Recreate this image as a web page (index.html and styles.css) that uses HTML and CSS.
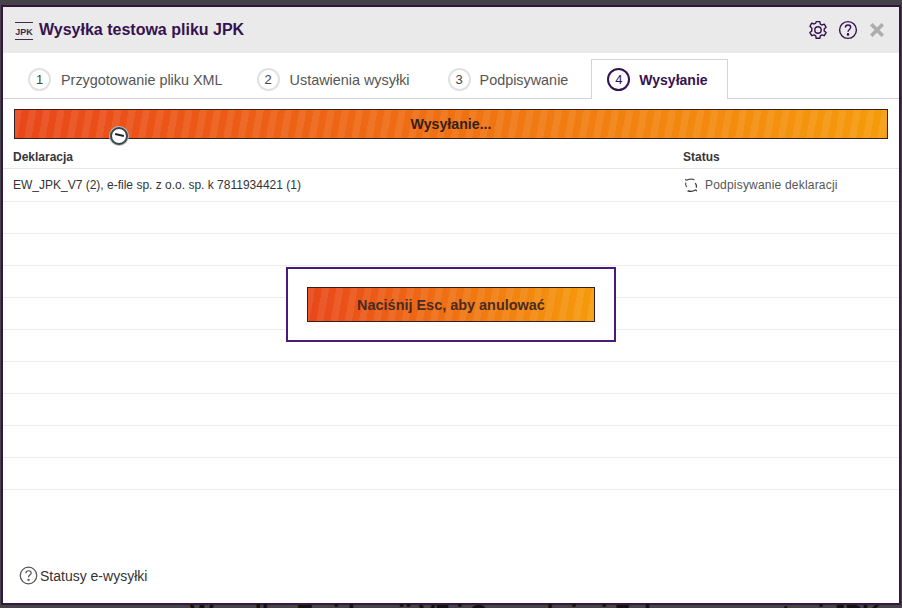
FILE: index.html
```html
<!DOCTYPE html>
<html lang="pl">
<head>
<meta charset="utf-8">
<title>Wysyłka testowa pliku JPK</title>
<link rel="stylesheet" href="styles.css">
</head>
<body>
<div class="backdrop">
  <main class="window">
    <header class="titlebar">
      <svg class="jpk" viewBox="0 0 18 18" width="18" height="18"><path d="M0 .5h18M0 17.500h18" stroke="#3c2a4f" stroke-width="1" fill="none"/><text x="9" y="12.800" text-anchor="middle" class="jpk-text">JPK</text></svg>
      <h1 class="title">Wysyłka testowa pliku JPK</h1>
      <div class="tools">
        <svg class="tool" viewBox="0 0 20 20" width="20" height="20" fill="none" stroke="#36124f" stroke-width="1.400" stroke-linejoin="round"><path d="M8.200 1.600h3.600l.5 2.500 1.600.9 2.400-.8 1.800 3.100-1.900 1.700v1.900l1.900 1.700-1.800 3.100-2.400-.8-1.600.9-.5 2.500H8.200l-.5-2.500-1.600-.9-2.400.8-1.800-3.100 1.900-1.700V8.000L1.900 6.300l1.800-3.100 2.400.8 1.600-.9z"/><circle cx="10" cy="10" r="3.200"/></svg>
        <svg class="tool" viewBox="0 0 20 20" width="20" height="20" fill="none" stroke="#36124f" stroke-width="1.400"><circle cx="10" cy="10" r="8.400"/><path d="M7.400 7.600c0-1.600 1.200-2.600 2.700-2.600s2.600 1 2.600 2.300c0 2.100-2.700 2.200-2.700 4.400"/><circle cx="10" cy="14.400" r=".6" fill="#36124f"/></svg>
        <svg class="close" viewBox="0 0 14 14" width="14" height="14"><path d="M2.500 2.500l9 9M11.500 2.500l-9 9" stroke="#adadad" stroke-width="3.600" stroke-linecap="square"/></svg>
      </div>
    </header>

    <nav class="tabs">
      <div class="tab"><span class="num">1</span>Przygotowanie pliku XML</div>
      <div class="tab"><span class="num">2</span>Ustawienia wysyłki</div>
      <div class="tab"><span class="num">3</span>Podpisywanie</div>
      <div class="tab active"><span class="num">4</span>Wysyłanie</div>
    </nav>

    <div class="bar main-bar">Wysyłanie...</div>

    <div class="table">
      <div class="row head"><div>Deklaracja</div><div>Status</div></div>
      <div class="row"><div>EW_JPK_V7 (2), e-file sp. z o.o. sp. k 7811934421 (1)</div>
        <div class="status">
          <svg viewBox="0 0 16 16" width="16" height="16" fill="none" stroke="#555" stroke-width="1.200"><path d="M11.500 2.800C9.500 1.800 6.500 1.800 3.200 3.400M3.200 3.400l-.9-1.400M2.700 5.500C2.300 7.500 3 9.200 3.800 10.200"/><path d="M4.600 13.600C6.500 14.600 9.500 14.800 12.800 12.800M12.800 12.800l.9 1.400M13.300 10.700C13.700 9 13.300 7.500 12.300 6.200" stroke="#333"/></svg>
          <span>Podpisywanie deklaracji</span>
        </div>
      </div>
      <div class="row empty"></div>
      <div class="row empty"></div>
      <div class="row empty"></div>
      <div class="row empty"></div>
      <div class="row empty"></div>
      <div class="row empty"></div>
      <div class="row empty"></div>
      <div class="row empty"></div>
      <div class="row empty"></div>
    </div>

    <footer class="foot">
      <svg viewBox="0 0 20 20" width="19" height="19" fill="none" stroke="#555" stroke-width="1.300"><circle cx="10" cy="10" r="8.700"/><path d="M7.300 7.700c0-1.700 1.200-2.700 2.800-2.700s2.700 1 2.700 2.400c0 2.100-2.800 2.200-2.800 4.400"/><circle cx="10" cy="14.600" r=".6" fill="#555"/></svg>
      <span>Statusy e-wysyłki</span>
    </footer>

    <div class="esc-dialog"><div class="bar esc-bar">Naciśnij Esc, aby anulować</div></div>
    <div class="cursor"><span></span></div>
  </main>
  <div class="behind">Wysyłka Ewidencji V7 i Sprzedaży i Zakupu w postaci JPK</div>
</div>
</body>
</html>
```

FILE: styles.css
```css
* { box-sizing: border-box; }
html, body { margin: 0; height: 100%; overflow: hidden; }
body { background: #454347; font-family: "Liberation Sans", Arial, sans-serif; }
.backdrop { height: 608px; padding: 5px 0 0 1px; overflow: hidden; }
.window {
  position: relative; width: 900px; height: 600px; background: #fff;
  border: 2px solid #35173f; border-top-color: #33143f;
  display: flex; flex-direction: column;
}
.titlebar { height: 46px; background: #eaeaea; display: flex; align-items: center; padding: 0 15px 0 12px; flex: none; }
.jpk { margin-top: 1px; }
.jpk-text { font: bold 9px "Liberation Sans", sans-serif; fill: #3c2a4f; }
.title { margin: 0 0 0 6px; font-size: 16px; font-weight: bold; color: #36124f; }
.tools { margin-left: auto; display: flex; align-items: center; gap: 10px; }
.close { margin-left: 2px; }
.tabs { height: 46px; border-bottom: 1px solid #d4d4d4; display: flex; align-items: flex-end; padding-left: 9px; flex: none; }
.tab { height: 40px; display: flex; align-items: center; font-size: 14.400px; color: #555; padding: 0 17px; margin-bottom: -1px; border: 1px solid transparent; border-bottom: 0; white-space: nowrap; }
.num { width: 23px; height: 23px; border: 2px solid #e1e1e1; border-radius: 50%; display: inline-flex; align-items: center; justify-content: center; margin-right: 10px; color: #444; font-size: 13px; flex: none; }
.tab:nth-child(1) { padding-left: 15px; padding-right: 16px; }
.tab:nth-child(2) { padding-left: 16px; padding-right: 18px; }
.tab:nth-child(3) { padding-left: 18px; padding-right: 22px; }
.tab:nth-child(3) .num { margin-right: 9px; }
.tab.active { background: #fff; border-color: #d4d4d4; color: #36124f; font-size: 14px; font-weight: bold; padding-left: 15px; padding-right: 0; width: 137px; }
.tab.active .num { border-color: #36124f; color: #36124f; font-weight: normal; margin-right: 9px; }
.bar {
  border: 1px solid #33201c; color: #33201c; font-weight: bold; font-size: 14.200px;
  display: flex; align-items: center; justify-content: center;
  background:
    repeating-linear-gradient(100deg, rgba(255,255,255,.08) 0 7px, rgba(255,255,255,0) 7px 14px),
    linear-gradient(90deg, #e9471a, #f59b0b);
}
.main-bar { height: 30px; margin: 10px 11px 0; flex: none; }
.table { margin-top: 7px; font-size: 12px; color: #333; flex: none; }
.row { height: 32px; display: grid; grid-template-columns: 670px 1fr; align-items: center; padding: 0 10px; border-bottom: 1px solid #ececec; }
.head { height: 23px; font-weight: bold; color: #36363a; border-bottom-color: #e6e6e6; font-size: 12px; }
.head + .row { height: 33px; }
.status { display: flex; align-items: center; gap: 6px; color: #555; font-size: 12px; letter-spacing: .2px; }
.foot { margin-top: auto; margin-bottom: 18px; padding-left: 16px; display: flex; align-items: center; gap: 2px; color: #333; font-size: 14px; }
.esc-dialog {
  position: absolute; left: 283px; top: 260px; width: 330px; height: 75px;
  background: #fff; border: 2px solid #4a1a7a; padding: 18px 19px;
}
.esc-bar { height: 35px; font-size: 14.450px; color: #4a2c22; }
.cursor {
  position: absolute; left: 107px; top: 120px; width: 18px; height: 18px; border-radius: 50%;
  background: #fff; border: 2px solid #39474b; box-shadow: 0 0 0 1px #bbb;
}
.cursor span { position: absolute; left: 3px; top: 5px; width: 9px; height: 2px; background: #222; transform: rotate(12deg); }
.behind {
  position: absolute; left: 190px; top: 600px; white-space: nowrap;
  font-size: 25px; font-weight: bold; color: #111;
}
```
